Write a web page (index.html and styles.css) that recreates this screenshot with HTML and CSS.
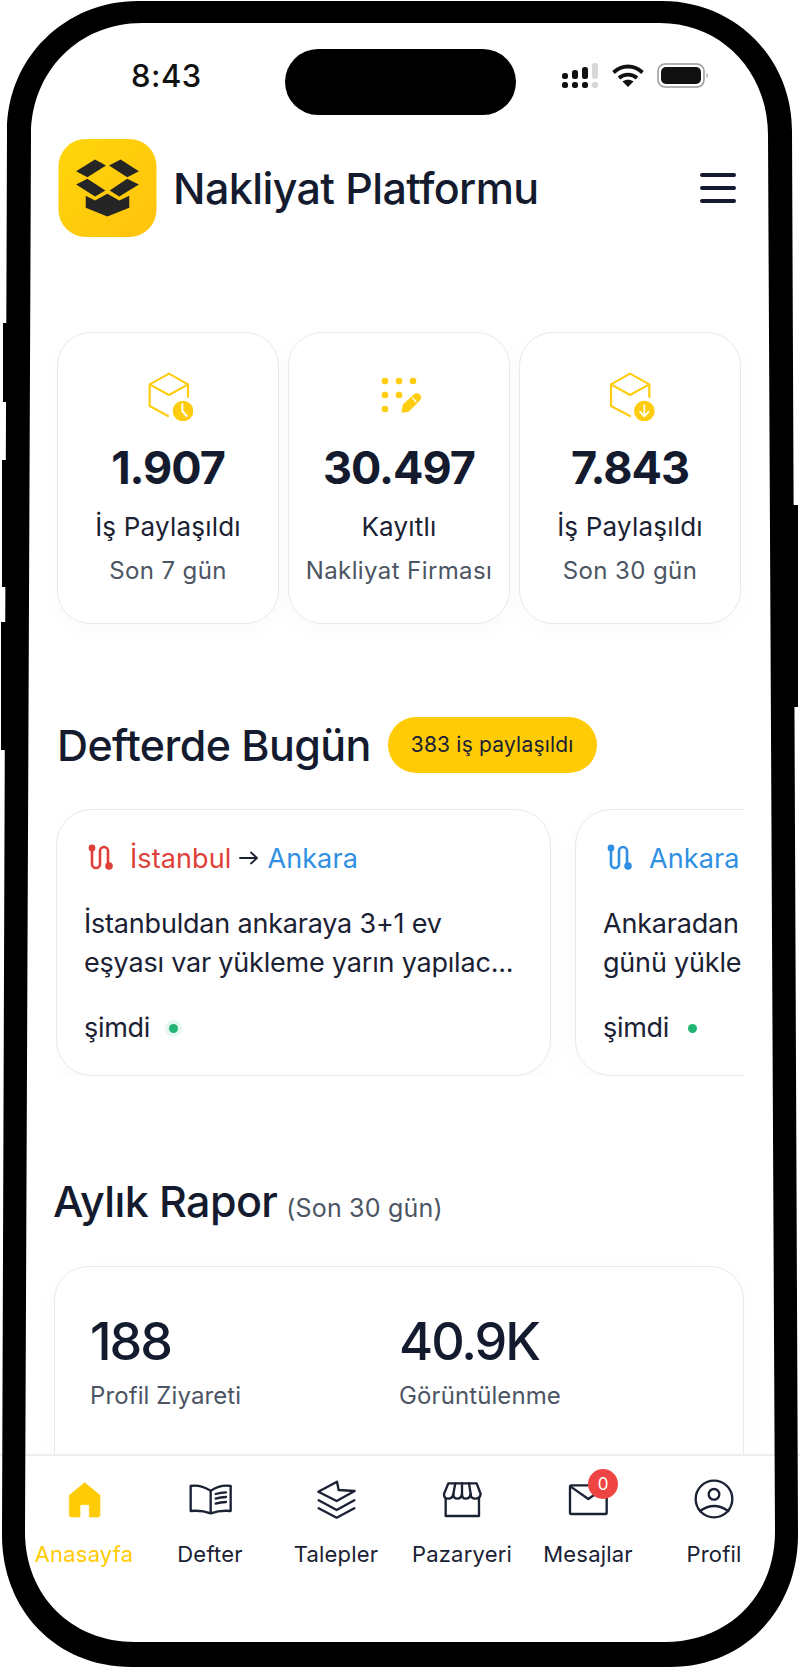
FILE: index.html
```html
<!DOCTYPE html>
<html lang="tr">
<head>
<meta charset="utf-8">
<title>Nakliyat Platformu</title>
<link rel="stylesheet" href="styles.css">
</head>
<body>
<div class="phone">
  <div class="status">
    <span class="time">8:43</span>
    <div class="status-icons">
      <svg class="signal" viewBox="0 0 37 25"><g fill="#111"><rect x="0" y="10" width="6" height="6" rx="2.500"/><rect x="0" y="19" width="6" height="6" rx="2.500"/><rect x="10" y="7" width="6" height="9" rx="2.500"/><rect x="10" y="19" width="6" height="6" rx="2.500"/><rect x="20" y="4" width="6" height="12" rx="2.500"/><rect x="20" y="19" width="6" height="6" rx="2.500"/></g><g fill="#d8d8d8"><rect x="30" y="0" width="6" height="16" rx="2.500"/><rect x="30" y="19" width="6" height="6" rx="2"/></g></svg>
      <svg class="wifi" viewBox="0 0 32 24"><path d="M1.500 9.500C10 1.500 22 1.500 30.500 9.500" fill="none" stroke="#111" stroke-width="3.800"/><path d="M7 15C12 10.500 20 10.500 25 15" fill="none" stroke="#111" stroke-width="3.800"/><path d="M16 24L10.500 18.500C13.500 16.200 18.500 16.200 21.500 18.500Z" fill="#111"/></svg>
      <svg class="battery" viewBox="0 0 53 25"><rect x="1" y="1" width="46" height="23" rx="7" fill="#fff" stroke="#999" stroke-width="1.500"/><rect x="4" y="4" width="40" height="17" rx="5" fill="#111"/><path d="M49.500 9.500Q52 12.500 49.500 15.500Z" fill="#999"/></svg>
    </div>
  </div>

  <header class="header">
    <svg class="logo" viewBox="175 415 295 295">
      <defs><linearGradient id="lg" x1="0" y1="0" x2="1" y2="1"><stop offset="0" stop-color="#ffd60a"/><stop offset="1" stop-color="#ffc20e"/></linearGradient></defs>
      <rect x="175" y="415" width="295" height="295" rx="82" fill="url(#lg)"/>
      <g fill="#252525">
        <path d="M228 512L285 477L318 495L262 530Z"/>
        <path d="M327 495L362 477L417 512L382 530Z"/>
        <path d="M228 552L262 535L316 570L285 588Z"/>
        <path d="M329 570L382 535L417 552L358 588Z"/>
        <path d="M257 586L285 600L322 580L358 600L388 586V622L322 648L257 622Z"/>
      </g>
    </svg>
    <h1 class="brand">Nakliyat Platformu</h1>
    <div class="burger"><i></i><i></i><i></i></div>
  </header>

  <main class="main">
    <section class="stats">
      <article class="stat">
        <svg class="stat-icon" viewBox="310 150 150 150"><path d="M385 285L330 255V190L388 158L445 190V228M330 190L388 222L445 190" fill="none" stroke="#ffcc0f" stroke-width="6.500" stroke-linecap="round" stroke-linejoin="round"/><circle cx="430" cy="270" r="31" fill="#ffcc0f"/><path d="M428 250V270L441 285" fill="none" stroke="#fff" stroke-width="6" stroke-linecap="round" stroke-linejoin="round"/></svg>
        <div class="num">1.907</div>
        <div class="label">İş Paylaşıldı</div>
        <div class="sub">Son 7 gün</div>
      </article>
      <article class="stat">
        <svg class="stat-icon" viewBox="43 30 150 150"><g fill="#ffcc0f"><circle cx="76" cy="60" r="10"/><circle cx="118" cy="60" r="10"/><circle cx="160" cy="60" r="10"/><circle cx="76" cy="102" r="10"/><circle cx="118" cy="102" r="10"/><circle cx="76" cy="144" r="10"/><path d="M125 155L130 130L165 98Q174 93 182 103Q188 111 180 119L147 152Z"/></g><path d="M158 110L170 123" stroke="#fff" stroke-width="4"/></svg>
        <div class="num">30.497</div>
        <div class="label">Kayıtlı</div>
        <div class="sub">Nakliyat Firması</div>
      </article>
      <article class="stat">
        <svg class="stat-icon" viewBox="615 150 150 150"><path d="M690 285L633 255V190L690 158L748 190V228M633 190L690 222L748 190" fill="none" stroke="#ffcc0f" stroke-width="6.500" stroke-linecap="round" stroke-linejoin="round"/><circle cx="733" cy="270" r="31" fill="#ffcc0f"/><path d="M733 252V285M720 272L733 286L746 272" fill="none" stroke="#fff" stroke-width="5" stroke-linecap="round" stroke-linejoin="round"/></svg>
        <div class="num">7.843</div>
        <div class="label">İş Paylaşıldı</div>
        <div class="sub">Son 30 gün</div>
      </article>
    </section>

    <section class="today">
      <div class="today-head">
        <h2 class="title">Defterde Bugün</h2>
        <span class="pill">383 iş paylaşıldı</span>
      </div>
      <div class="routes">
        <article class="route">
          <div class="route-top">
            <svg class="route-icon red" viewBox="0 0 30 30"><path d="M5 5V21a4 4 0 0 0 8 0V8a4 4 0 0 1 8 0V23" fill="none" stroke="currentColor" stroke-width="2.600"/><circle cx="5" cy="5" r="3.400" fill="currentColor"/><circle cx="22" cy="23" r="3.800" fill="currentColor"/></svg>
            <span class="city red">İstanbul</span>
            <svg class="arrow" viewBox="0 0 20 14"><path d="M1 7H18M12 1.500L18 7L12 12.500" fill="none" stroke="#1a2133" stroke-width="1.800" stroke-linecap="round" stroke-linejoin="round"/></svg>
            <span class="city blue">Ankara</span>
          </div>
          <p class="desc">İstanbuldan ankaraya 3+1 ev<br>eşyası var yükleme yarın yapılac...</p>
          <div class="when">şimdi <span class="dot halo"></span></div>
        </article>
        <article class="route">
          <div class="route-top">
            <svg class="route-icon blue" viewBox="0 0 30 30"><path d="M5 5V21a4 4 0 0 0 8 0V8a4 4 0 0 1 8 0V23" fill="none" stroke="currentColor" stroke-width="2.600"/><circle cx="5" cy="5" r="3.400" fill="currentColor"/><circle cx="22" cy="23" r="3.800" fill="currentColor"/></svg>
            <span class="city blue">Ankara</span>
          </div>
          <p class="desc">Ankaradan<br>günü yükle</p>
          <div class="when">şimdi <span class="dot"></span></div>
        </article>
      </div>
    </section>

    <section class="report">
      <h2 class="title report-title">Aylık Rapor <small>(Son 30 gün)</small></h2>
      <div class="report-card">
        <div class="metric"><div class="metric-num">188</div><div class="metric-label">Profil Ziyareti</div></div>
        <div class="metric"><div class="metric-num">40.9K</div><div class="metric-label">Görüntülenme</div></div>
      </div>
    </section>
  </main>

  <nav class="nav">
    <a class="tab active">
      <svg class="tab-icon" viewBox="177 135 150 150"><path d="M254 158L300 196V255Q300 261 294 261H268V224H240V261H214Q208 261 208 255V196Z" fill="#ffcb05" stroke="#ffcb05" stroke-width="2" stroke-linejoin="round"/></svg>
      <span>Anasayfa</span>
    </a>
    <a class="tab">
      <svg class="tab-icon" viewBox="555 135 150 150"><g fill="none" stroke="#1a2133" stroke-width="7" stroke-linecap="round" stroke-linejoin="round"><path d="M632 182Q600 163 572 168V243Q605 240 632 250Q660 240 692 243V168Q662 163 632 182V250"/><path d="M647 192Q662 187 678 187M647 206Q662 201 678 201M647 221Q662 216 678 216"/></g></svg>
      <span>Defter</span>
    </a>
    <a class="tab">
      <svg class="tab-icon" viewBox="933 135 150 150"><g fill="none" stroke="#1a2133" stroke-width="7" stroke-linecap="round" stroke-linejoin="round"><path d="M955 185L1011 155L1016 180L1064 183L1010 213Z"/><path d="M956 211L1010 240L1063 211M956 235L1010 263L1063 235"/></g></svg>
      <span>Talepler</span>
    </a>
    <a class="tab">
      <svg class="tab-icon" viewBox="111 135 150 150"><g fill="none" stroke="#1a2133" stroke-width="7" stroke-linecap="round" stroke-linejoin="round"><path d="M137 205V258H237V205"/><path d="M145 160H230L242 192Q240 206 226 206Q212 206 212 192Q210 206 197 206Q186 206 186 192Q184 206 172 206Q160 206 160 192Q158 206 144 206Q132 206 132 192Z"/><path d="M160 192L166 160M186 192V160M212 192L207 160"/></g></svg>
      <span>Pazaryeri</span>
    </a>
    <a class="tab">
      <svg class="tab-icon" viewBox="489 135 150 150"><g fill="none" stroke="#1a2133" stroke-width="7" stroke-linecap="round" stroke-linejoin="round"><rect x="510" y="166" width="110" height="86" rx="4"/><path d="M512 170L565 207L618 170"/></g></svg>
      <span class="badge">0</span>
      <span>Mesajlar</span>
    </a>
    <a class="tab">
      <svg class="tab-icon" viewBox="867 135 150 150"><g fill="none" stroke="#1a2133" stroke-width="7" stroke-linecap="round"><circle cx="942" cy="207" r="55"/><circle cx="942" cy="193" r="16"/><path d="M900 243Q942 213 985 243"/></g></svg>
      <span>Profil</span>
    </a>
  </nav>

  <svg class="frame" viewBox="0 0 800 1668">
    <path fill-rule="evenodd" fill="#000" d="M138 1H662C735 1 792 58 792 131L798 1535C798 1609 745 1667 670 1667H132C55 1667 2 1609 2 1535L7 131C7 58 65 1 138 1Z M142 23C78 23 31 72 31 135L25 1532C25 1596 72 1642 135 1642H665C728 1642 775 1596 775 1532L768 135C768 72 722 23 660 23Z"/>
    <rect x="3" y="323" width="6" height="79" fill="#000"/>
    <rect x="2" y="460" width="6" height="127" fill="#000"/>
    <rect x="1" y="622" width="6" height="128" fill="#000"/>
    <rect x="793" y="505" width="5" height="202" fill="#000"/>
  </svg>
  <div class="island"></div>
</div>
</body>
</html>
```
FILE: styles.css
```css
* { box-sizing: border-box; }
html, body { margin: 0; padding: 0; background: #fff; }
body { font-family: "Inter", "Noto Sans", sans-serif; color: #141b2e; }
.phone { position: relative; width: 800px; height: 1668px; overflow: hidden; display: flex; flex-direction: column; background: #fff; }
.frame { position: absolute; inset: 0; width: 800px; height: 1668px; pointer-events: none; }
.island { position: absolute; left: 285px; top: 49px; width: 231px; height: 66px; border-radius: 33px; background: #000; }

.status { height: 139px; flex: none; display: flex; justify-content: space-between; align-items: flex-start; padding: 58px 90px 0 131px; }
.time { font-size: 31px; line-height: 36px; font-weight: 500; color: #111; letter-spacing: 0.500px; }
.status-icons { display: flex; align-items: flex-start; gap: 13px; padding-top: 5px; }
.signal { width: 37px; height: 25px; }
.wifi { width: 32px; height: 24px; }
.battery { width: 53px; height: 25px; }

.header { height: 98px; flex: none; display: flex; align-items: center; padding: 0 64px 0 58px; }
.logo { width: 99px; height: 98px; flex: none; }
.brand { margin: 0 0 0 16px; flex: 1; font-size: 43px; font-weight: 500; letter-spacing: -0.600px; color: #141b2e; }
.burger { width: 36px; display: flex; flex-direction: column; gap: 9px; }
.burger i { display: block; height: 4px; border-radius: 2px; background: #141b2e; }

.main { flex: 1; min-height: 0; overflow: hidden; padding-top: 95px; }
.stats { display: flex; gap: 9px; padding-left: 57px; }
.stat { width: 222px; height: 292px; border: 1.500px solid #e9e9eb; border-radius: 34px; background: #fff; box-shadow: 0 6px 24px rgba(0,0,0,.025); display: flex; flex-direction: column; align-items: center; padding-top: 38px; }
.stat-icon { width: 50px; height: 50px; }
.num { font-size: 45px; line-height: 54px; font-weight: 700; margin-top: 20px; color: #141b2e; letter-spacing: -1px; }
.label { font-size: 26px; line-height: 32px; margin-top: 16px; color: #1a2133; letter-spacing: 0.200px; }
.sub { font-size: 24px; line-height: 30px; margin-top: 13px; color: #4b5563; letter-spacing: 0.400px; white-space: nowrap; }

.today { margin-top: 93px; }
.today-head { display: flex; align-items: center; padding-left: 57px; height: 56px; }
.title { margin: 0; font-size: 43px; font-weight: 500; letter-spacing: -0.600px; color: #141b2e; }
.pill { margin-left: 17px; height: 56px; padding: 0 23px; border-radius: 28px; background: #ffcb05; font-size: 21px; line-height: 56px; color: #1a2133; letter-spacing: 0.200px; white-space: nowrap; }
.routes { display: flex; gap: 24px; margin: 36px 56px 0 56px; overflow: hidden; }
.route { flex: none; width: 495px; height: 267px; border: 1.500px solid #e9e9eb; border-radius: 36px; background: #fff; padding: 32px 0 0 27px; box-shadow: 0 6px 24px rgba(0,0,0,.025); }
.route-top { display: flex; align-items: center; height: 32px; padding-left: 3px; white-space: nowrap; }
.route-icon { width: 30px; height: 30px; margin-right: 13px; flex: none; }
.city { font-size: 27px; letter-spacing: 0.100px; }
.red { color: #e0403a; }
.blue { color: #2f8fe2; }
.arrow { width: 20px; height: 14px; margin: 0 8px; }
.desc { margin: 30px 0 0; font-size: 27px; line-height: 39px; color: #1a2133; letter-spacing: -0.200px; white-space: nowrap; }
.when { margin-top: 28px; font-size: 27px; line-height: 36px; color: #1a2133; letter-spacing: -0.300px; display: flex; align-items: center; gap: 19px; }
.dot { width: 9px; height: 9px; border-radius: 50%; background: #22b573; flex: none; }
.dot.halo { box-shadow: 0 0 0 4px #e6f7ef; }

.report { margin-top: 99px; }
.report-title { padding-left: 53px; line-height: 52px; }
.report-title small { font-size: 25px; font-weight: 400; letter-spacing: 0.200px; color: #4b5563; margin-left: -2px; }
.report-card { margin: 32px 56px 0 54px; height: 300px; border: 1.500px solid #e9e9eb; border-radius: 34px; display: flex; padding: 44px 0 0 35px; box-shadow: 0 6px 24px rgba(0,0,0,.025); }
.metric { width: 309px; }
.metric-num { font-size: 52px; line-height: 62px; font-weight: 500; letter-spacing: -2px; color: #141b2e; }
.metric-label { font-size: 24px; line-height: 30px; margin-top: 8px; color: #4b5563; letter-spacing: 0.100px; }

.nav { flex: none; height: 214px; border-top: 2px solid #eeeeef; background: #fff; display: grid; grid-template-columns: repeat(6, 126px); padding: 19px 0 0 21px; }
.tab { position: relative; display: flex; flex-direction: column; align-items: center; font-size: 22px; line-height: 30px; color: #1a2133; letter-spacing: 0.200px; white-space: nowrap; }
.tab.active { color: #ffcb05; }
.tab-icon { width: 50px; height: 50px; margin-bottom: 14px; }
.badge { position: absolute; left: 63px; top: -6px; width: 30px; height: 30px; border-radius: 50%; background: #ef4444; color: #fff; font-size: 17px; line-height: 30px; text-align: center; letter-spacing: 0; }
```
